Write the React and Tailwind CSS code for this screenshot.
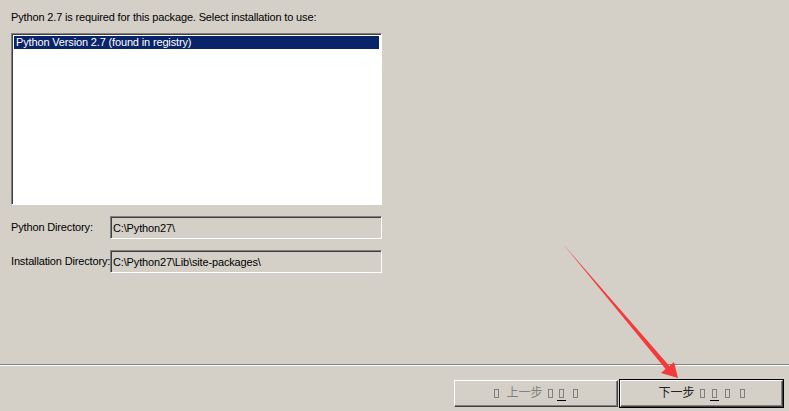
import React from 'react';

const font = { fontFamily: '"Liberation Sans", "Noto Sans CJK SC", sans-serif' };

function Tofu({ underline, className = '' }) {
  return (
    <span className={`relative inline-flex ${className}`}>
      <span className="inline-block w-[5px] h-[9px] border border-[#808080]" />
      {underline ? <span className="absolute left-[-2px] top-[11px] w-[9px] h-px bg-black" /> : null}
    </span>
  );
}

function Field({ label, value }) {
  return (
    <div className="flex items-center h-[23px]">
      <span className="w-[99px] shrink-0 whitespace-nowrap">{label}</span>
      <div className="w-[272px] h-[23px] border border-t-[#808080] border-l-[#808080] border-b-white border-r-white shadow-[inset_1px_1px_0_#404040] bg-[#d4d0c8] flex items-center pl-[2px] pt-px">
        {value}
      </div>
    </div>
  );
}

export default function App() {
  return (
    <div
      className="relative w-[789px] h-[411px] bg-[#d4d0c8] text-[11px] leading-[13px] text-black flex flex-col overflow-hidden"
      style={font}
    >
      <div className="px-[11px] pt-[11px]">
        <p className="tracking-[-0.15px]">Python 2.7 is required for this package. Select installation to use:</p>
        <div className="mt-[9px] w-[371px] h-[172px] border border-t-[#808080] border-l-[#808080] border-b-white border-r-white shadow-[inset_1px_1px_0_#404040] bg-white p-[2px] pl-[2px]">
          <div className="bg-[#0a246a] text-white h-[13px] px-[2px] leading-[13px] tracking-[-0.15px]">
            Python Version 2.7 (found in registry)
          </div>
        </div>
        <div className="mt-[11px] flex flex-col gap-[11px] tracking-[-0.15px]">
          <Field label="Python Directory:" value="C:\Python27\" />
          <Field label="Installation Directory:" value="C:\Python27\Lib\site-packages\" />
        </div>
      </div>

      <div className="mt-auto mb-[45px] h-[2px] border-t border-t-[#808080] border-b border-b-white" />

      <div className="absolute left-0 right-0 top-[379px] flex pl-[454px] gap-[1px]">
        <button
          type="button"
          disabled
          className="mt-px w-[164px] h-[27px] border border-t-white border-l-white border-b-[#404040] border-r-[#404040] shadow-[inset_-1px_-1px_0_#808080] bg-[#d4d0c8] flex items-center justify-center text-[#808080] text-[12px]"
        >
          <Tofu />
          <span className="ml-[7px]">上一步</span>
          <Tofu className="ml-[5px]" />
          <Tofu className="ml-[6px]" underline />
          <Tofu className="ml-[9px]" />
        </button>
        <button
          type="button"
          className="w-[165px] h-[29px] border border-black bg-[#d4d0c8] flex text-[12px] text-[#222]"
        >
          <span className="flex-1 border border-t-white border-l-white border-b-[#404040] border-r-[#404040] shadow-[inset_-1px_-1px_0_#808080] flex items-center justify-center">
            <span>下一步</span>
            <Tofu className="ml-[5px]" />
            <Tofu className="ml-[7px]" underline />
            <Tofu className="ml-[8px]" />
            <Tofu className="ml-[10px]" />
          </span>
        </button>
      </div>

      <svg className="absolute left-0 top-0 pointer-events-none" width="789" height="411">
        <polygon
          points="563,244 669.4,365.9 674,362 678,378 661,373 665.6,369.1"
          fill="#f43a3a"
        />
      </svg>
    </div>
  );
}
